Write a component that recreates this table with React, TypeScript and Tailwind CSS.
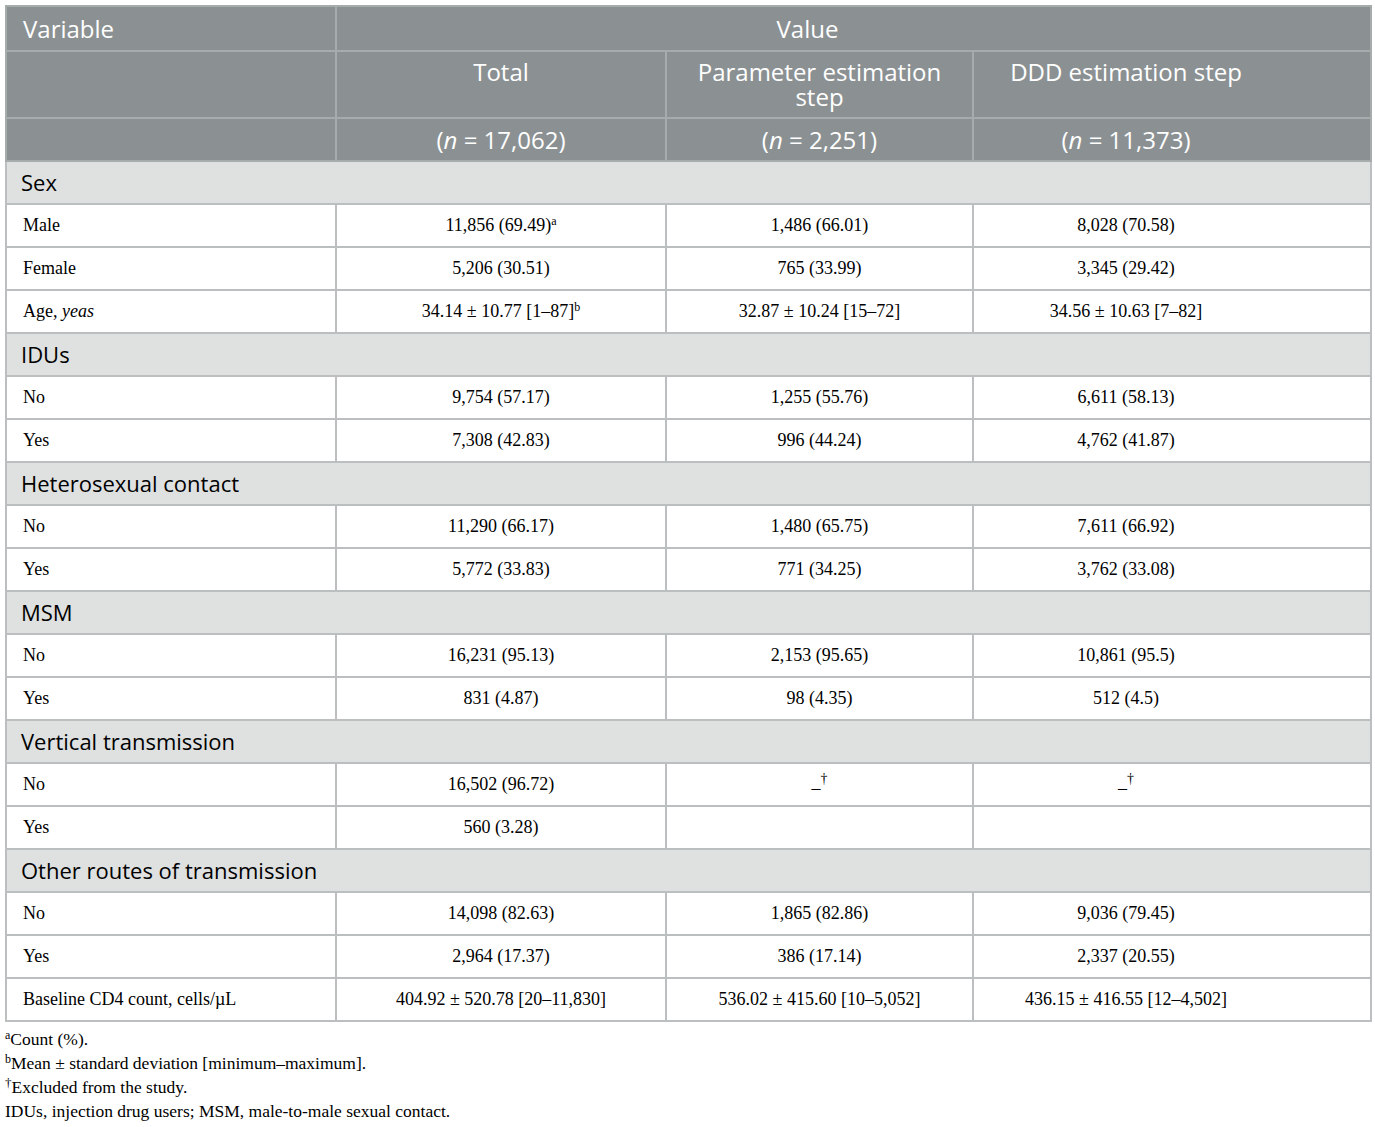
type Row =
  | { kind: "section"; label: string }
  | { kind: "data"; label: React.ReactNode; cells: React.ReactNode[] };

const sup = (s: string) => <sup className="text-[12px]">{s}</sup>;
const dash = (
  <>
    <span className="relative top-[4px]">–</span>
    <sup className="text-[14px]">†</sup>
  </>
);

const rows: Row[] = [
  { kind: "section", label: "Sex" },
  { kind: "data", label: "Male", cells: [<>11,856 (69.49){sup("a")}</>, "1,486 (66.01)", "8,028 (70.58)"] },
  { kind: "data", label: "Female", cells: ["5,206 (30.51)", "765 (33.99)", "3,345 (29.42)"] },
  {
    kind: "data",
    label: (
      <>
        Age, <i>yeas</i>
      </>
    ),
    cells: [<>34.14 ± 10.77 [1–87]{sup("b")}</>, "32.87 ± 10.24 [15–72]", "34.56 ± 10.63 [7–82]"],
  },
  { kind: "section", label: "IDUs" },
  { kind: "data", label: "No", cells: ["9,754 (57.17)", "1,255 (55.76)", "6,611 (58.13)"] },
  { kind: "data", label: "Yes", cells: ["7,308 (42.83)", "996 (44.24)", "4,762 (41.87)"] },
  { kind: "section", label: "Heterosexual contact" },
  { kind: "data", label: "No", cells: ["11,290 (66.17)", "1,480 (65.75)", "7,611 (66.92)"] },
  { kind: "data", label: "Yes", cells: ["5,772 (33.83)", "771 (34.25)", "3,762 (33.08)"] },
  { kind: "section", label: "MSM" },
  { kind: "data", label: "No", cells: ["16,231 (95.13)", "2,153 (95.65)", "10,861 (95.5)"] },
  { kind: "data", label: "Yes", cells: ["831 (4.87)", "98 (4.35)", "512 (4.5)"] },
  { kind: "section", label: "Vertical transmission" },
  { kind: "data", label: "No", cells: ["16,502 (96.72)", dash, dash] },
  { kind: "data", label: "Yes", cells: ["560 (3.28)", "", ""] },
  { kind: "section", label: "Other routes of transmission" },
  { kind: "data", label: "No", cells: ["14,098 (82.63)", "1,865 (82.86)", "9,036 (79.45)"] },
  { kind: "data", label: "Yes", cells: ["2,964 (17.37)", "386 (17.14)", "2,337 (20.55)"] },
  {
    kind: "data",
    label: "Baseline CD4 count, cells/µL",
    cells: ["404.92 ± 520.78 [20–11,830]", "536.02 ± 415.60 [10–5,052]", "436.15 ± 416.55 [12–4,502]"],
  },
];

const head = "border-2 border-[#a6abac] bg-[#8b9193] text-white font-normal";
const line = "border-2 border-[#bcbfbf]";

export default function App() {
  return (
    <div className="bg-white p-[5px] text-black">
      <table className="w-[1365px] table-fixed border-collapse border-2 border-[#bcbfbf]">
        <colgroup>
          <col className="w-[330px]" />
          <col className="w-[330px]" />
          <col className="w-[307px]" />
          <col className="w-[398px]" />
        </colgroup>
        <thead className="font-['Open_Sans',sans-serif] text-[24px] leading-[25px]">
          <tr className="h-[45px]">
            <th className={`${head} px-[16px] text-left`}>Variable</th>
            <th colSpan={3} className={`${head} pr-[92px] text-center`}>
              Value
            </th>
          </tr>
          <tr className="h-[67px]">
            <th className={head}></th>
            <th className={`${head} px-4 pt-[7px] align-top`}>Total</th>
            <th className={`${head} px-4 pt-[7px] align-top`}>Parameter estimation step</th>
            <th className={`${head} pr-[92px] pt-[7px] align-top`}>DDD estimation step</th>
          </tr>
          <tr className="h-[43px]">
            <th className={head}></th>
            <th className={head}>
              (<i>n</i> = 17,062)
            </th>
            <th className={head}>
              (<i>n</i> = 2,251)
            </th>
            <th className={`${head} pr-[92px]`}>
              (<i>n</i> = 11,373)
            </th>
          </tr>
        </thead>
        <tbody className="font-['Liberation_Serif',serif] text-[18px]">
          {rows.map((r, i) =>
            r.kind === "section" ? (
              <tr key={i} className="h-[43px] bg-[#dfe1e0]">
                <td colSpan={4} className={`${line} px-[14px] font-['Open_Sans',sans-serif] text-[22px]`}>
                  {r.label}
                </td>
              </tr>
            ) : (
              <tr key={i} className="h-[43px]">
                <td className={`${line} px-[16px]`}>{r.label}</td>
                <td className={`${line} text-center`}>{r.cells[0]}</td>
                <td className={`${line} text-center`}>{r.cells[1]}</td>
                <td className={`${line} pr-[92px] text-center`}>{r.cells[2]}</td>
              </tr>
            ),
          )}
        </tbody>
      </table>
      <div className="mt-[5px] font-['Liberation_Serif',serif] text-[17.5px] leading-[24px]">
        <p>
          <sup className="text-[12px]">a</sup>Count (%).
        </p>
        <p>
          <sup className="text-[12px]">b</sup>Mean ± standard deviation [minimum–maximum].
        </p>
        <p>
          <sup className="text-[13px]">†</sup>Excluded from the study.
        </p>
        <p>IDUs, injection drug users; MSM, male-to-male sexual contact.</p>
      </div>
    </div>
  );
}
